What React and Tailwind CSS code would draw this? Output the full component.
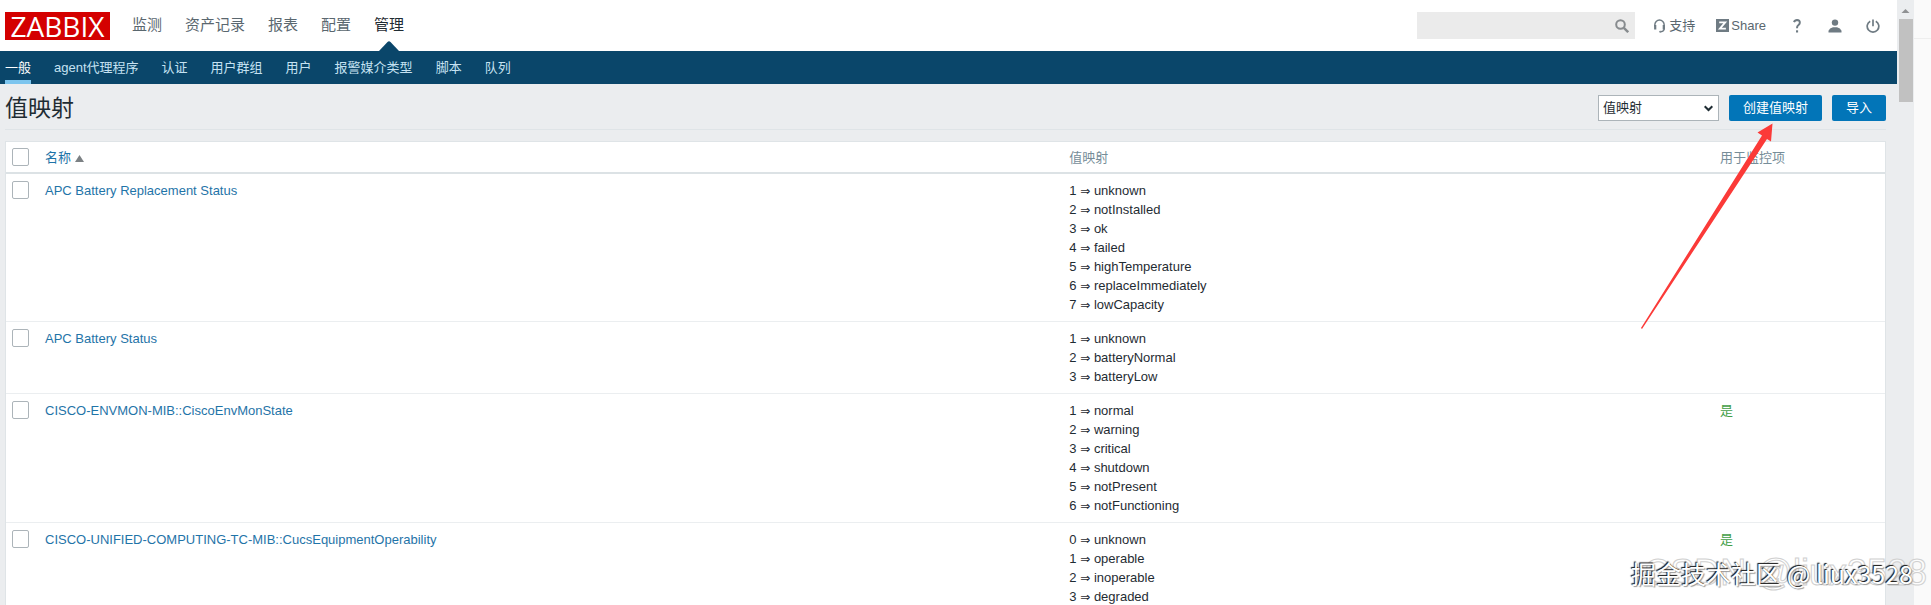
import React from "react";

const mainMenu = ["监测", "资产记录", "报表", "配置", "管理"];
const subMenu = ["一般", "agent代理程序", "认证", "用户群组", "用户", "报警媒介类型", "脚本", "队列"];

const rows = [
  {
    name: "APC Battery Replacement Status",
    maps: [[1, "unknown"], [2, "notInstalled"], [3, "ok"], [4, "failed"], [5, "highTemperature"], [6, "replaceImmediately"], [7, "lowCapacity"]],
    used: false,
  },
  {
    name: "APC Battery Status",
    maps: [[1, "unknown"], [2, "batteryNormal"], [3, "batteryLow"]],
    used: false,
  },
  {
    name: "CISCO-ENVMON-MIB::CiscoEnvMonState",
    maps: [[1, "normal"], [2, "warning"], [3, "critical"], [4, "shutdown"], [5, "notPresent"], [6, "notFunctioning"]],
    used: true,
  },
  {
    name: "CISCO-UNIFIED-COMPUTING-TC-MIB::CucsEquipmentOperability",
    maps: [[0, "unknown"], [1, "operable"], [2, "inoperable"], [3, "degraded"]],
    used: true,
  },
];

function Checkbox({ label }) {
  return (
    <input
      type="checkbox"
      aria-label={label}
      className="block h-[18px] w-[17px] appearance-none rounded-xs border border-[#acb4b9] bg-white checked:bg-[#0275b8]"
    />
  );
}

function Header() {
  return (
    <header className="flex h-[51px] items-center bg-white pl-[5px] pr-[17px]">
      <a href="#home" className="flex h-7 w-[105px] shrink-0 items-center justify-center bg-[#d40000]" aria-label="ZABBIX">
        <span className="font-['Open_Sans',sans-serif] text-[28px] leading-7 text-white">ZABBIX</span>
      </a>
      <nav className="ml-[22px] flex h-full gap-[23px] text-[15px]">
        {mainMenu.map((item) => (
          <a
            key={item}
            href="#menu"
            className={
              item === "管理"
                ? "relative flex items-center text-[#1f2c33]"
                : "flex items-center text-[#5a676f]"
            }
          >
            {item}
            {item === "管理" && (
              <svg className="absolute bottom-0 left-1/2 -translate-x-1/2" width="20" height="10" viewBox="0 0 20 10" aria-hidden="true">
                <path d="M0 10 L8.5 1 Q10 -0.4 11.5 1 L20 10Z" fill="#0a466a" />
              </svg>
            )}
          </a>
        ))}
      </nav>
      <form className="ml-auto flex h-[27px] w-[218px] items-center bg-[#ebebeb] pr-[6px]">
        <input type="text" aria-label="搜索" className="h-full min-w-0 flex-1 bg-transparent px-1 outline-none" />
        <button type="button" aria-label="搜索" className="shrink-0">
          <svg width="14" height="14" viewBox="0 0 14 14" fill="none" stroke="#878b8e" aria-hidden="true">
            <circle cx="5.5" cy="5.5" r="4.3" strokeWidth="2" />
            <path d="M8.8 8.8 L13.2 13.2" strokeWidth="2.4" />
          </svg>
        </button>
      </form>
      <nav className="ml-[18px] flex items-center text-[13px] text-[#5a676f]">
        <a href="#support" className="flex items-center gap-[3px]">
          <svg width="13" height="14" viewBox="0 0 13 14" fill="none" stroke="#6f7b83" aria-hidden="true">
            <path d="M1.8 7.5V6a4.7 5 0 0 1 9.4 0v3.5q0 3-3.4 3.2" strokeWidth="1.4" />
            <path d="M2.2 6v4.6M10.8 6v4.6" strokeWidth="2.2" />
            <circle cx="7.2" cy="12.7" r="0.7" fill="#6f7b83" strokeWidth="0.6" />
          </svg>
          支持
        </a>
        <a href="#share" className="ml-[21px] flex items-center gap-[2px]">
          <svg width="13" height="13" viewBox="0 0 13 13" aria-hidden="true">
            <rect width="13" height="13" fill="#6f7b83" />
            <path d="M3.2 3.4h6L3.9 9.6h6" fill="none" stroke="#fff" strokeWidth="1.8" />
          </svg>
          Share
        </a>
        <a href="#help" aria-label="帮助" className="ml-[27px]">
          <svg width="8" height="14" viewBox="0 0 8 14" fill="none" stroke="#6f7b83" aria-hidden="true">
            <path d="M1 3.2Q1.8 1 4 1Q7 1.2 6.8 3.8Q6.6 5.2 5.2 6.3Q4 7.2 4 9.2" strokeWidth="2" />
            <path d="M3 12.4h2.1" strokeWidth="2.2" />
          </svg>
        </a>
        <a href="#profile" aria-label="用户资料" className="ml-[27px]">
          <svg width="14" height="14" viewBox="0 0 13 14" fill="#6f7b83" aria-hidden="true">
            <circle cx="6.5" cy="3.6" r="3.2" />
            <path d="M0 13.5V11.8Q1 8.8 4.5 8.2h4Q12 8.8 13 11.8v1.7Z" />
          </svg>
        </a>
        <a href="#logout" aria-label="退出" className="ml-6">
          <svg width="14" height="14" viewBox="0 0 14 14" fill="none" stroke="#6f7b83" strokeWidth="1.7" aria-hidden="true">
            <path d="M4.2 2.2a5.8 5.8 0 1 0 5.6 0M7 0.4v6.8" />
          </svg>
        </a>
      </nav>
    </header>
  );
}

function SubNav() {
  return (
    <nav className="flex h-[33px] gap-[23px] bg-[#0a466a] pl-[5px] text-[13px] text-[#c5e2f2]">
      {subMenu.map((item, i) => (
        <a
          key={item}
          href="#section"
          className={
            i === 0
              ? "flex items-center border-b-4 border-[#7cc5ee] pt-1 text-white"
              : "flex items-center"
          }
        >
          {item}
        </a>
      ))}
    </nav>
  );
}

function TitleBar() {
  return (
    <div className="flex h-[46px] items-center border-b border-[#dfe4e7] pt-[2px] text-[13px]">
      <h1 className="pt-[2px] text-[23px] text-[#1f2c33]">值映射</h1>
      <div className="relative ml-auto">
        <select
          aria-label="一般"
          className="block h-[26px] w-[121px] appearance-none border border-[#acb4b9] bg-white pl-1 text-[#1f2c33]"
          defaultValue="值映射"
        >
          <option>值映射</option>
        </select>
        <svg className="pointer-events-none absolute right-[6px] top-[10px]" width="9" height="7" viewBox="0 0 9 7" fill="none" stroke="#1f2c33" strokeWidth="2" aria-hidden="true">
          <path d="M0.7 1.2 L4.5 5 L8.3 1.2" />
        </svg>
      </div>
      <button type="button" className="ml-[10px] h-[26px] rounded-xs bg-[#0275b8] px-[14px] text-white">
        创建值映射
      </button>
      <button type="button" className="ml-[10px] h-[26px] rounded-xs bg-[#0275b8] px-[14px] text-white">
        导入
      </button>
    </div>
  );
}

function MapTable() {
  return (
    <table className="mt-[11px] w-full table-fixed border-separate border-spacing-0 border border-[#dfe4e7] bg-white text-[13px] leading-[19px] text-[#1f2c33]">
      <colgroup>
        <col className="w-[39px]" />
        <col className="w-[54.25%]" />
        <col />
        <col className="w-[165px]" />
      </colgroup>
      <thead>
        <tr className="h-8 text-left text-[#768d99]">
          <th className="border-b-2 border-[#dce2e5] pl-[6px]">
            <Checkbox label="全选" />
          </th>
          <th className="border-b-2 border-[#dce2e5] font-normal">
            <a href="#sort" className="flex items-center gap-1 text-[#1f74a8]">
              名称
              <svg className="mt-[3px]" width="9" height="7" viewBox="0 0 9 7" aria-hidden="true">
                <path d="M4.5 0 L9 7H0Z" fill="#7c8184" />
              </svg>
            </a>
          </th>
          <th className="border-b-2 border-[#dce2e5] pl-[5px] font-normal">值映射</th>
          <th className="border-b-2 border-[#dce2e5] font-normal">用于监控项</th>
        </tr>
      </thead>
      <tbody>
        {rows.map((row) => (
          <tr key={row.name} className="align-top">
            <td className="border-b border-[#ebeef0] py-[7px] pl-[6px]">
              <Checkbox label={row.name} />
            </td>
            <td className="border-b border-[#ebeef0] py-[7px]">
              <a href="#valuemap" className="text-[#1f74a8]">{row.name}</a>
            </td>
            <td className="border-b border-[#ebeef0] py-[7px] pl-[5px]">
              {row.maps.map(([value, text]) => (
                <div key={value}>
                  {value} <span className="font-['DejaVu_Sans',sans-serif] text-[12px] leading-none">⇒</span> {text}
                </div>
              ))}
            </td>
            <td className="border-b border-[#ebeef0] py-[7px] text-[#429e47]">{row.used ? "是" : ""}</td>
          </tr>
        ))}
      </tbody>
    </table>
  );
}

function Scrollbar() {
  return (
    <div className="flex w-[17px] shrink-0 flex-col items-center bg-[#ebedef] pt-[2px]" aria-hidden="true">
      <svg width="17" height="17" viewBox="0 0 17 17">
        <path d="M4.5 11 L8.5 7 L12.5 11Z" fill="#8f9193" />
      </svg>
      <div className="h-[83px] w-[14px] bg-[#c1c1c1]" />
    </div>
  );
}

export default function App() {
  return (
    <div className="relative flex h-screen overflow-hidden bg-[#ebedef] font-['Liberation_Sans','Noto_Sans_CJK_SC',sans-serif]">
      <div className="min-w-0 flex-1">
        <Header />
        <SubNav />
        <main className="pl-[5px] pr-[11px]">
          <TitleBar />
          <MapTable />
        </main>
      </div>
      <Scrollbar />
      <div className="flex w-[17px] shrink-0 flex-col bg-[#fafafa]">
        <div className="h-[39px] border-b border-[#eeeeee]" />
      </div>
      <svg className="pointer-events-none absolute right-[155px] top-[120px]" width="140" height="212" viewBox="0 0 140 212" aria-hidden="true">
        <path d="M136.5 3.5 L121.5 12.5 L126 15.5 L5 208 L6 209 L131 19 L135 21.5Z" fill="#fb3a38" />
      </svg>
      <div className="pointer-events-none absolute bottom-3 right-1 whitespace-nowrap text-[36px] leading-10 text-white/60 [-webkit-text-stroke:1px_#d0d0d0]">
        CSDN @liux3528
      </div>
      <div className="pointer-events-none absolute bottom-[14px] right-[18px] whitespace-nowrap font-['Noto_Sans_CJK_SC',sans-serif] text-[25px] leading-9 text-white [text-shadow:-1px_-1px_1px_#111,1px_1px_1px_#999]">
        掘金技术社区 @ liux3528
      </div>
    </div>
  );
}
